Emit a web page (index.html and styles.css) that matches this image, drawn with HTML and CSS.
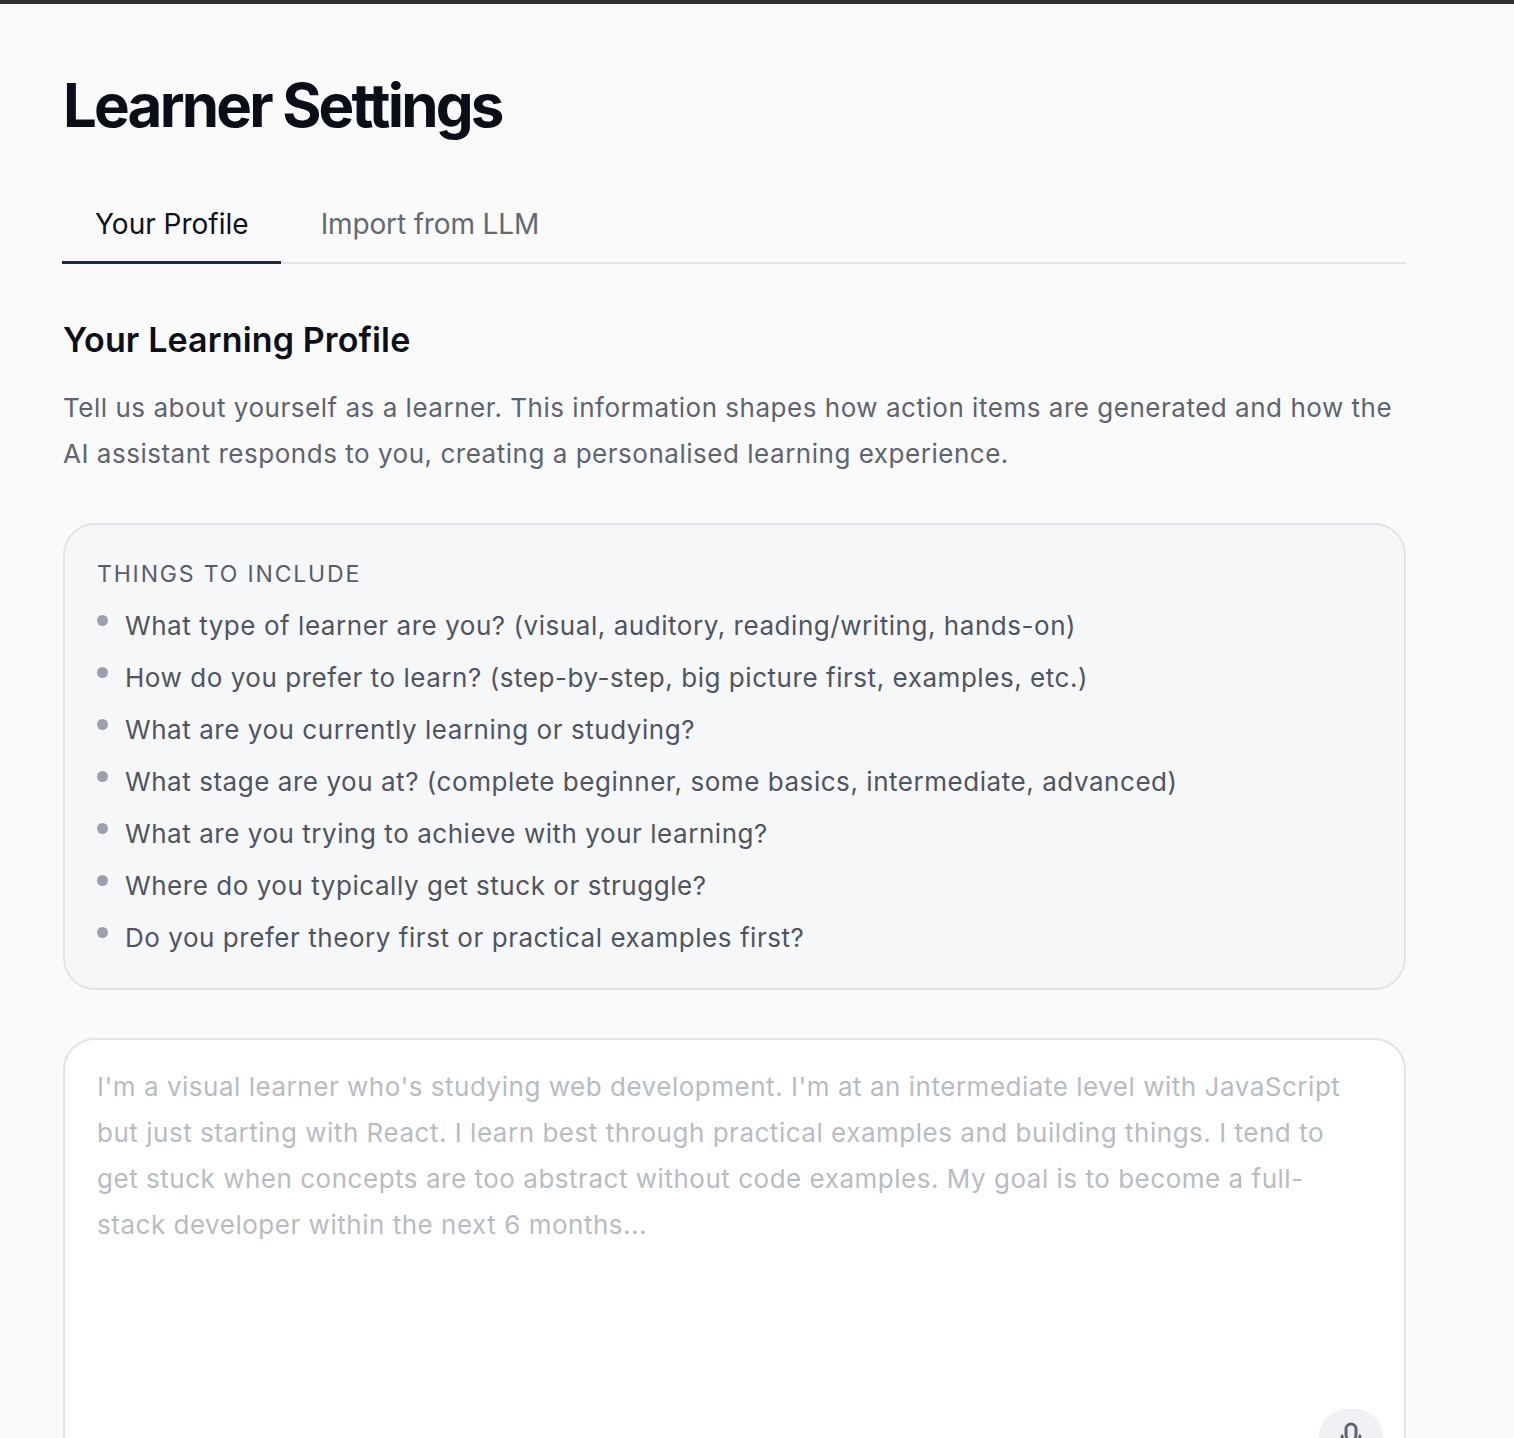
FILE: index.html
```html
<!DOCTYPE html>
<html lang="en">
<head>
<meta charset="utf-8">
<title>Learner Settings</title>
<link rel="stylesheet" href="styles.css">
</head>
<body>
<div class="topbar"></div>
<main class="page">
  <h1 class="title">Learner Settings</h1>
  <nav class="tabs">
    <div class="tab active">Your Profile</div>
    <div class="tab">Import from LLM</div>
  </nav>
  <section class="section">
    <h2 class="section-title">Your Learning Profile</h2>
    <p class="intro">Tell us about yourself as a learner. This information shapes how action items are generated and how the AI assistant responds to you, creating a personalised learning experience.</p>
    <div class="panel">
      <div class="panel-title">Things to include</div>
      <ul class="list">
        <li class="item"><span class="dot"></span><span>What type of learner are you? (visual, auditory, reading/writing, hands-on)</span></li>
        <li class="item"><span class="dot"></span><span>How do you prefer to learn? (step-by-step, big picture first, examples, etc.)</span></li>
        <li class="item"><span class="dot"></span><span>What are you currently learning or studying?</span></li>
        <li class="item"><span class="dot"></span><span>What stage are you at? (complete beginner, some basics, intermediate, advanced)</span></li>
        <li class="item"><span class="dot"></span><span>What are you trying to achieve with your learning?</span></li>
        <li class="item"><span class="dot"></span><span>Where do you typically get stuck or struggle?</span></li>
        <li class="item"><span class="dot"></span><span>Do you prefer theory first or practical examples first?</span></li>
      </ul>
    </div>
    <div class="field">
      <div class="placeholder">I'm a visual learner who's studying web development. I'm at an intermediate level with JavaScript but just starting with React. I learn best through practical examples and building things. I tend to get stuck when concepts are too abstract without code examples. My goal is to become a full-stack developer within the next 6 months...</div>
      <button class="mic" type="button" aria-label="Voice input">
        <svg width="24" height="30" viewBox="0 0 24 30" fill="none" stroke="#5f6470" stroke-width="3" stroke-linecap="round">
          <rect x="7" y="2" width="10" height="16" rx="5"/>
          <path d="M3 14a9 9 0 0 0 18 0"/>
          <path d="M12 23v5"/>
        </svg>
      </button>
    </div>
  </section>
</main>
</body>
</html>
```
FILE: styles.css
```css
* { box-sizing: border-box; }
html, body { margin: 0; padding: 0; }
body {
  background: #fafafa;
  font-family: Inter, "Noto Sans", "Liberation Sans", sans-serif;
  color: #111827;
  overflow: hidden;
}
.topbar {
  height: 4px;
  background: #303030;
}
.page {
  width: 1343px;
  margin-left: 63px;
  padding-top: 71px;
}
.title {
  margin: 0;
  font-size: 60px;
  line-height: 60px;
  font-weight: 700;
  letter-spacing: -0.047em;
  color: #0a0e18;
}
.tabs {
  display: flex;
  margin-top: 68px;
  border-bottom: 2px solid #e3e4e9;
}
.tab {
  padding: 0 32px 16px 33px;
  font-size: 28px;
  line-height: 42px;
  color: #636875;
  margin-bottom: -2px;
  border-bottom: 3px solid transparent;
}
.tab + .tab { padding-left: 40px; letter-spacing: -0.005em; }
.tab.active {
  color: #0d111b;
  border-bottom-color: #1b2848;
  margin-left: -1px;
}
.section-title {
  margin: 54px 0 0 0;
  font-size: 34px;
  line-height: 43px;
  font-weight: 600;
  color: #0b0f19;
  letter-spacing: 0.004em;
}
.intro {
  margin: 24px 0 0 0;
  font-size: 26px;
  line-height: 46px;
  color: #5e6371;
  letter-spacing: 0.02em;
}
.panel {
  margin-top: 46px;
  background: #f6f7f9;
  border: 2px solid #e3e4e9;
  border-radius: 32px;
  padding: 33px 32px 27px 32px;
}
.panel-title {
  font-size: 23px;
  line-height: 32px;
  text-transform: uppercase;
  letter-spacing: 0.08em;
  color: #585d6a;
}
.list {
  list-style: none;
  margin: 13px 0 0 0;
  padding: 0;
  display: flex;
  flex-direction: column;
  gap: 6px;
}
.item {
  display: flex;
  align-items: flex-start;
  gap: 17px;
  font-size: 26px;
  line-height: 46px;
  color: #4f5463;
  letter-spacing: 0.021em;
}
.dot {
  flex: none;
  width: 11px;
  height: 11px;
  border-radius: 50%;
  background: #9da1ad;
  margin-top: 12px;
}
.field {
  position: relative;
  margin-top: 48px;
  height: 450px;
  background: #ffffff;
  border: 2px solid #e3e4e9;
  border-radius: 32px;
  padding: 24px 32px;
}
.placeholder {
  font-size: 26px;
  line-height: 46px;
  color: #b9bbc3;
  letter-spacing: 0.02em;
}
.mic {
  position: absolute;
  right: 21px;
  bottom: 21px;
  width: 64px;
  height: 56px;
  border: none;
  border-radius: 28px;
  background: #f0f1f4;
  display: flex;
  align-items: center;
  justify-content: center;
  padding: 0;
}
```
